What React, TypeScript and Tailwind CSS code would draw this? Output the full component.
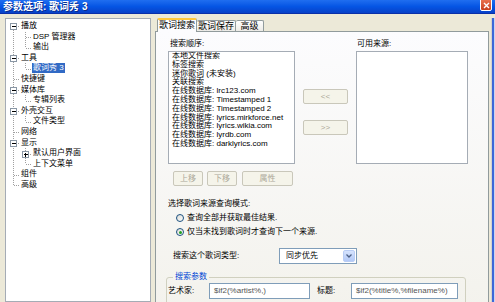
import React from "react";

const treeRows = [
  { label: "播放", level: 0, box: "minus" },
  { label: "DSP 管理器", level: 1 },
  { label: "输出", level: 1 },
  { label: "工具", level: 0, box: "minus" },
  { label: "歌词秀 3", level: 1, selected: true },
  { label: "快捷键", level: 0 },
  { label: "媒体库", level: 0, box: "minus" },
  { label: "专辑列表", level: 1 },
  { label: "外壳交互", level: 0, box: "minus" },
  { label: "文件类型", level: 1 },
  { label: "网络", level: 0 },
  { label: "显示", level: 0, box: "minus" },
  { label: "默认用户界面", level: 1, box: "plus" },
  { label: "上下文菜单", level: 1 },
  { label: "组件", level: 0 },
  { label: "高级", level: 0 },
];

// parent row -> child rows, used for the dotted lines
const groups = [
  [0, 2],
  [3, 4],
  [6, 7],
  [8, 9],
  [11, 13],
];

const searchOrder = [
  "本地文件搜索",
  "标签搜索",
  "迷你歌词 (未安装)",
  "关联搜索",
  "在线数据库: lrc123.com",
  "在线数据库: Timestamped 1",
  "在线数据库: Timestamped 2",
  "在线数据库: lyrics.mirkforce.net",
  "在线数据库: lyrics.wikia.com",
  "在线数据库: lyrdb.com",
  "在线数据库: darklyrics.com",
];

const ROW = 10.6;
const TOP = 2;

function TreeLines() {
  const cy = (i: number) => TOP + ROW * i + ROW / 2;
  return (
    <svg className="absolute inset-0 pointer-events-none" width="146" height="290">
      <g stroke="#a0a0a0" strokeDasharray="1 1" shapeRendering="crispEdges">
        <line x1="7.5" y1={cy(0)} x2="7.5" y2={cy(15)} />
        {treeRows.map((r, i) =>
          r.level === 0 ? (
            <line key={i} x1="8" y1={Math.round(cy(i)) + 0.5} x2="13" y2={Math.round(cy(i)) + 0.5} />
          ) : (
            <line key={i} x1="20" y1={Math.round(cy(i)) + 0.5} x2="25" y2={Math.round(cy(i)) + 0.5} />
          )
        )}
        {groups.map(([p, last]) => (
          <line key={p} x1="19.5" y1={TOP + ROW * (p + 1)} x2="19.5" y2={cy(last)} />
        ))}
      </g>
      {treeRows.map((r, i) => {
        if (!r.box) return null;
        const x = r.level === 0 ? 4.5 : 16.5;
        const y = Math.round(cy(i)) - 2.5;
        return (
          <g key={"b" + i} shapeRendering="crispEdges">
            <rect x={x} y={y} width="6" height="6" fill="#fff" stroke="#8a97a5" />
            <line x1={x + 1.5} y1={y + 3} x2={x + 5} y2={y + 3} stroke="#000" />
            {r.box === "plus" && <line x1={x + 3} y1={y + 1.5} x2={x + 3} y2={y + 5} stroke="#000" />}
          </g>
        );
      })}
    </svg>
  );
}

function XpButton({ label, w }: { label: string; w: string }) {
  return (
    <div
      className={`${w} h-[15px] flex items-center justify-center rounded-[2px] border border-[#c9c7ba] bg-[#f5f4ea] text-[#aca899] text-[8px] leading-none`}
    >
      {label}
    </div>
  );
}

function Radio({ checked, label }: { checked?: boolean; label: string }) {
  return (
    <div className="h-[14px] flex items-center pl-[20px] gap-[3px]">
      <div className="w-[8px] h-[8px] rounded-full border border-[#1c5180] bg-linear-to-br from-[#dcdcd6] to-white flex items-center justify-center">
        {checked && <div className="w-[3px] h-[3px] rounded-full bg-[#21a121]" />}
      </div>
      <span>{label}</span>
    </div>
  );
}

export default function App() {
  return (
    <div className="w-[495px] h-[302px] overflow-hidden bg-[#ece9d8] flex flex-col text-black text-[8px] font-['Liberation_Sans','Noto_Sans_CJK_SC',sans-serif]">
      {/* title bar */}
      <div className="h-[14px] shrink-0 flex justify-between bg-linear-to-b from-[#1f6ef0] via-[#0555e4] to-[#0841c8] border-b border-[#0a2fa8] pl-[3px] pr-[3px]">
        <span className="text-white text-[10px] font-bold leading-[13px] [text-shadow:1px_1px_0_#0b2a88]">
          参数选项: 歌词秀 3
        </span>
        <div className="w-[12px] h-[12px] -mt-px flex items-center justify-center rounded-b-[2px] border border-white bg-linear-to-b from-[#e9704c] to-[#c8401c]">
          <svg width="7" height="7" viewBox="0 0 7 7">
            <path d="M1 1L6 6M6 1L1 6" stroke="#fff" strokeWidth="1.4" />
          </svg>
        </div>
      </div>

      <div className="flex flex-1 min-h-0 pl-[5px] pt-[4px]">
        {/* tree */}
        <div className="relative w-[146px] shrink-0 bg-white border border-[#a5acb5] pt-[2px] text-[8px]">
          <TreeLines />
          {treeRows.map((r, i) => (
            <div
              key={i}
              className={`h-[10.6px] leading-[10.6px] whitespace-nowrap ${r.level === 0 ? "pl-[14px]" : "pl-[26px]"}`}
            >
              {r.selected ? (
                <span className="inline-block bg-[#316ac5] text-white px-[1px] leading-[10px]">{r.label}</span>
              ) : (
                <span className="px-[1px]">{r.label}</span>
              )}
            </div>
          ))}
        </div>

        {/* tabs + page */}
        <div className="ml-[4px] w-[334px] shrink-0 flex flex-col">
          <div className="flex items-end h-[13px] pl-[2px]">
            <div className="relative z-10 -mb-px h-[14px] w-[40px] rounded-t-[2px] border border-b-0 border-[#919b9c] border-t-2 border-t-[#ffc83c] bg-[#fcfcfe] text-[9px] leading-[11px] text-center">
              歌词搜索
            </div>
            <div className="h-[11px] w-[39px] rounded-t-[2px] border border-b-0 border-l-0 border-[#919b9c] bg-linear-to-b from-[#fefefe] to-[#ecebe6] text-[9px] leading-[11px] text-center">
              歌词保存
            </div>
            <div className="h-[11px] w-[28px] rounded-t-[2px] border border-b-0 border-l-0 border-[#919b9c] bg-linear-to-b from-[#fefefe] to-[#ecebe6] text-[9px] leading-[11px] text-center">
              高级
            </div>
          </div>

          <div className="flex-1 border border-[#919b9c] bg-linear-to-b from-[#fcfcfe] to-[#f3f2ec]">
            <div className="flex pt-[7px] pl-[12px]">
              <div className="w-[127px]">
                <div className="h-[10px] leading-[10px] pl-[2px] mb-[2px]">搜索顺序:</div>
                <div className="h-[113px] bg-white border border-[#a5acb5] pl-[3px] leading-[8.8px] whitespace-nowrap overflow-hidden">
                  {searchOrder.map((s) => (
                    <div key={s}>{s}</div>
                  ))}
                </div>
              </div>
              <div className="ml-[8px] w-[45px] pt-[50px] flex flex-col gap-[16px]">
                <XpButton label="<<" w="w-[45px]" />
                <XpButton label=">>" w="w-[45px]" />
              </div>
              <div className="ml-[8px] w-[112px]">
                <div className="h-[10px] leading-[10px] pl-[1px] mb-[2px]">可用来源:</div>
                <div className="h-[113px] bg-white border border-[#a5acb5]" />
              </div>
            </div>

            <div className="flex mt-[7px] pl-[17px] gap-[4px]">
              <XpButton label="上移" w="w-[30px]" />
              <XpButton label="下移" w="w-[30px]" />
              <div className="ml-[1px]">
                <XpButton label="属性" w="w-[51px]" />
              </div>
            </div>

            <div className="mt-[13px] pl-[12px] h-[10px] leading-[10px]">选择歌词来源查询模式:</div>
            <div className="mt-[2px]">
              <Radio label="查询全部并获取最佳结果." />
              <Radio checked label="仅当未找到歌词时才查询下一个来源." />
            </div>

            <div className="mt-[9px] pl-[17px] h-[16px] flex items-center">
              <span className="w-[106px]">搜索这个歌词类型:</span>
              <div className="w-[78px] h-[16px] flex items-center justify-between bg-white border border-[#7f9db9] pl-[6px] pr-px">
                <span>同步优先</span>
                <div className="w-[12px] h-[12px] rounded-[2px] border border-[#b9cdf5] bg-linear-to-b from-[#d6e3fd] to-[#b3c9f7] flex items-center justify-center">
                  <svg width="6" height="4" viewBox="0 0 6 4">
                    <path d="M0.5 0.5L3 3L5.5 0.5" stroke="#4d6185" strokeWidth="1.3" fill="none" />
                  </svg>
                </div>
              </div>
            </div>

            <div className="relative mt-[13px] ml-[10px] w-[300px] h-[40px] border border-[#d0d0bf] rounded-[3px] pt-[5px] pl-px">
              <span className="absolute -top-[6px] left-[6px] px-[2px] bg-[#f5f4ef] text-[#0046d5] leading-[10px]">搜索参数</span>
              <div className="flex items-center h-[16px]">
                <span className="w-[41px]">艺术家:</span>
                <div className="w-[101px] h-[16px] bg-white border border-[#7f9db9] pl-[4px] leading-[14px] text-[#555]">
                  $if2(%artist%,)
                </div>
                <span className="w-[34px] ml-[7px]">标题:</span>
                <div className="w-[107px] h-[16px] bg-white border border-[#7f9db9] pl-[4px] leading-[14px] text-[#555] whitespace-nowrap overflow-hidden">
                  $if2(%title%,%filename%)
                </div>
              </div>
            </div>
          </div>
        </div>

        <div className="ml-[2px] w-[1px] bg-[#d6d3ce]" />
        <div className="w-[2px] bg-[#3d68d8]" />
        <div className="flex-1 bg-[#c9d5f2]" />
      </div>
    </div>
  );
}
